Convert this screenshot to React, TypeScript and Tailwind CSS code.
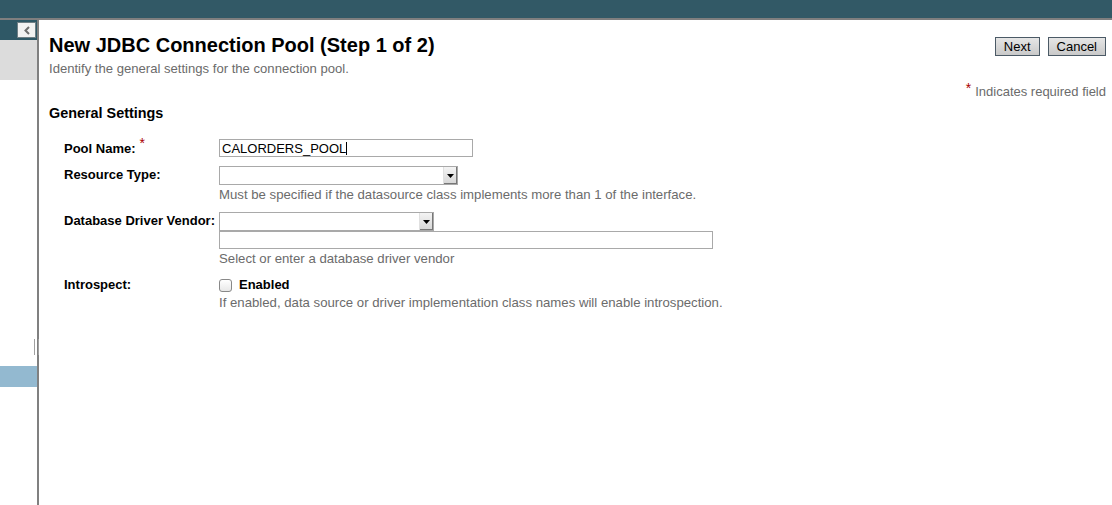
import React from 'react';

const Select = ({ width }: { width: string }) => (
  <div className={`flex h-[19px] ${width} border border-[#a9a9a9] bg-white`}>
    <div className="flex-1" />
    <div className="flex w-[14px] items-center justify-center border-l border-[#e0e0e0] bg-gradient-to-b from-[#f4f4f4] to-[#d6d6d6] shadow-[inset_-1px_-1px_0_#777]">
      <svg width="7" height="4" viewBox="0 0 7 4">
        <path d="M0 0h7L3.5 4z" fill="#000" />
      </svg>
    </div>
  </div>
);

const Row = ({ label, required, children }: { label: string; required?: boolean; children: React.ReactNode }) => (
  <div className="flex">
    <div className="w-[155px] shrink-0 pt-[1px] text-[13px] font-bold leading-[16px] text-black">
      {label}
      {required && <span className="relative -top-[5px] ml-[4px] text-[14px] font-normal text-[#a00]">*</span>}
    </div>
    <div className="flex flex-col">{children}</div>
  </div>
);

const Help = ({ children }: { children: React.ReactNode }) => (
  <div className="pt-[2px] text-[13.2px] leading-[16px] text-[#6b6b6b]">{children}</div>
);

export default function App() {
  return (
    <div className="flex h-[505px] w-[1112px] flex-col overflow-hidden bg-white font-['Liberation_Sans',Arial,sans-serif]">
      <div className="h-[18px] shrink-0 bg-[#325966]" />
      <div className="h-[2px] shrink-0 bg-[#7f7f7f]" />
      <div className="flex flex-1">
        {/* left nav panel */}
        <div className="relative flex w-[37px] shrink-0 flex-col">
          <div className="flex h-[20px] items-center justify-end bg-[#2f5866] pr-[1px]">
            <button className="flex h-[16px] w-[19px] items-center justify-center border border-[#6f7f85] bg-[#f2f2f2]">
              <svg width="6" height="9" viewBox="0 0 6 9">
                <path d="M5 1L1.5 4.5L5 8" stroke="#6e6e6e" strokeWidth="2" fill="none" />
              </svg>
            </button>
          </div>
          <div className="h-[40px] bg-[#dcdcdc]" />
          <div className="h-[286px]" />
          <div className="h-[21px] bg-[#93b9d0]" />
          <div className="absolute left-[34px] top-[319px] flex h-[16px] gap-[1px]">
            <div className="w-[1px] bg-[#a0a0a0]" />
            <div className="w-[1px] bg-white" />
            <div className="w-[1px] bg-[#a0a0a0]" />
          </div>
        </div>
        <div className="w-[2px] shrink-0 bg-[#808080]" />

        {/* main content */}
        <div className="flex-1 pl-[10px] pr-[6px]">
          <div className="flex items-start justify-between pt-[12px]">
            <h1 className="text-[20px] font-bold leading-[26px] text-black">New JDBC Connection Pool (Step 1 of 2)</h1>
            <div className="flex gap-[8px] pt-[5px]">
              <button className="h-[19px] border border-[#4b5a66] bg-gradient-to-b from-[#e6e6e6] to-[#c9c9c9] px-[8px] text-[13px] leading-[16px] text-black">Next</button>
              <button className="h-[19px] border border-[#4b5a66] bg-gradient-to-b from-[#e6e6e6] to-[#c9c9c9] px-[8px] text-[13px] leading-[16px] text-black">Cancel</button>
            </div>
          </div>
          <p className="pt-[3px] text-[13.1px] leading-[16px] text-[#6b6b6b]">Identify the general settings for the connection pool.</p>
          <div className="pt-[6px] text-right text-[13px] leading-[16px] text-[#6b6b6b]">
            <span className="relative -top-[3px] mr-[4px] text-[14px] text-[#a00]">*</span>Indicates required field
          </div>
          <h2 className="pt-[3px] text-[14.4px] font-bold leading-[20px] text-black">General Settings</h2>

          <div className="flex flex-col gap-[9px] pl-[15px] pt-[16px]">
            <Row label="Pool Name:" required>
              <div className="h-[18px] w-[254px] border border-[#a9a9a9] bg-white px-[2px] text-[13px] leading-[16px] text-black">
                CALORDERS_POOL<span className="inline-block h-[13px] w-[1px] translate-y-[2px] bg-black" />
              </div>
            </Row>
            <Row label="Resource Type:">
              <Select width="w-[239px]" />
              <Help>Must be specified if the datasource class implements more than 1 of the interface.</Help>
            </Row>
            <Row label="Database Driver Vendor:">
              <Select width="w-[215px]" />
              <div className="h-[18px] w-[494px] border border-[#a9a9a9] bg-white" />
              <Help>Select or enter a database driver vendor</Help>
            </Row>
            <Row label="Introspect:">
              <label className="flex items-center gap-[7px] pt-[1px]">
                <span className="h-[13px] w-[13px] rounded-[3px] border border-[#888] bg-gradient-to-b from-white to-[#e8e8e8]" />
                <span className="text-[13px] font-bold leading-[16px] text-black">Enabled</span>
              </label>
              <Help>If enabled, data source or driver implementation class names will enable introspection.</Help>
            </Row>
          </div>
        </div>
      </div>
    </div>
  );
}
